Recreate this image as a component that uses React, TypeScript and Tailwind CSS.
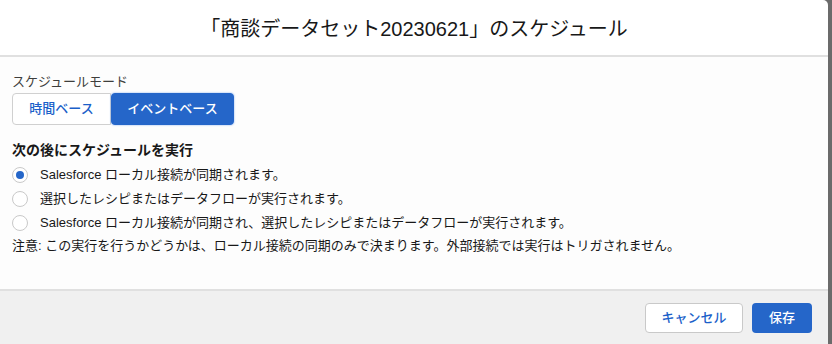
import React, { useState } from 'react';

const options = [
  'Salesforce ローカル接続が同期されます。',
  '選択したレシピまたはデータフローが実行されます。',
  'Salesforce ローカル接続が同期され、選択したレシピまたはデータフローが実行されます。',
];

const App: React.FC = () => {
  const [mode, setMode] = useState<'time' | 'event'>('event');
  const [selected, setSelected] = useState(0);

  return (
    <div
      className="w-[832px] h-[344px] bg-[#6b6b6b] flex overflow-hidden"
      style={{ fontFamily: '"Liberation Sans", "Noto Sans CJK JP", sans-serif' }}
    >
      <div className="w-[828px] h-full bg-white rounded-tr-[5px] flex flex-col text-[#181818]">
        <div className="h-[57px] flex items-center justify-center border-b-2 border-[#e0e0e0] shrink-0">
          <h1 className="text-[20px] leading-none text-[#181818] pt-[2px]">「商談データセット20230621」のスケジュール</h1>
        </div>

        <div className="flex-1 bg-[#fdfdfd] px-[12px] pt-[17px]">
          <div className="text-[13px] leading-[16px] text-[#3e3e3c]">スケジュールモード</div>
          <div className="flex mt-[3px] h-[32px] w-[222px]">
            <button
              onClick={() => setMode('time')}
              className={`w-[99px] h-full text-[13px] font-medium rounded-l-[4px] border ${
                mode === 'time' ? 'bg-[#2566c9] text-white border-[#2566c9]' : 'bg-white text-[#1b5fc9] border-[#d0d0d0]'
              }`}
            >
              時間ベース
            </button>
            <button
              onClick={() => setMode('event')}
              className={`w-[123px] h-full text-[13px] font-medium rounded-[4px] border ${
                mode === 'event' ? 'bg-[#2566c9] text-white border-[#2566c9] shadow-[0_0_2px_#7aa7f0]' : 'bg-white text-[#1b5fc9] border-[#d0d0d0]'
              }`}
            >
              イベントベース
            </button>
          </div>

          <div className="mt-[16px] text-[14px] font-bold leading-[18px]">次の後にスケジュールを実行</div>

          <div className="mt-[4px] flex flex-col">
            {options.map((o, i) => (
              <label key={i} className="flex items-center h-[24px] cursor-pointer" onClick={() => setSelected(i)}>
                <span className="w-[16px] h-[16px] rounded-full border border-[#c9c9c9] bg-white flex items-center justify-center shrink-0">
                  {selected === i && <span className="w-[8px] h-[8px] rounded-full bg-[#2566c9]" />}
                </span>
                <span className="ml-[12px] text-[13px] text-[#181818]">{o}</span>
              </label>
            ))}
          </div>

          <div className="mt-[1px] text-[13px] text-[#181818]">
            注意: この実行を行うかどうかは、ローカル接続の同期のみで決まります。外部接続では実行はトリガされません。
          </div>
        </div>

        <div className="h-[55px] bg-[#f0f0f0] border-t-2 border-[#e0e0e0] flex items-center justify-end gap-[9px] pr-[16px] shrink-0">
          <button className="w-[98px] h-[30px] bg-white border border-[#c9c9c9] rounded-[4px] text-[13px] font-medium text-[#1b5fc9]">
            キャンセル
          </button>
          <button className="w-[60px] h-[30px] bg-[#2566c9] rounded-[4px] text-[13px] font-medium text-white">
            保存
          </button>
        </div>
      </div>
    </div>
  );
};

export default App;
